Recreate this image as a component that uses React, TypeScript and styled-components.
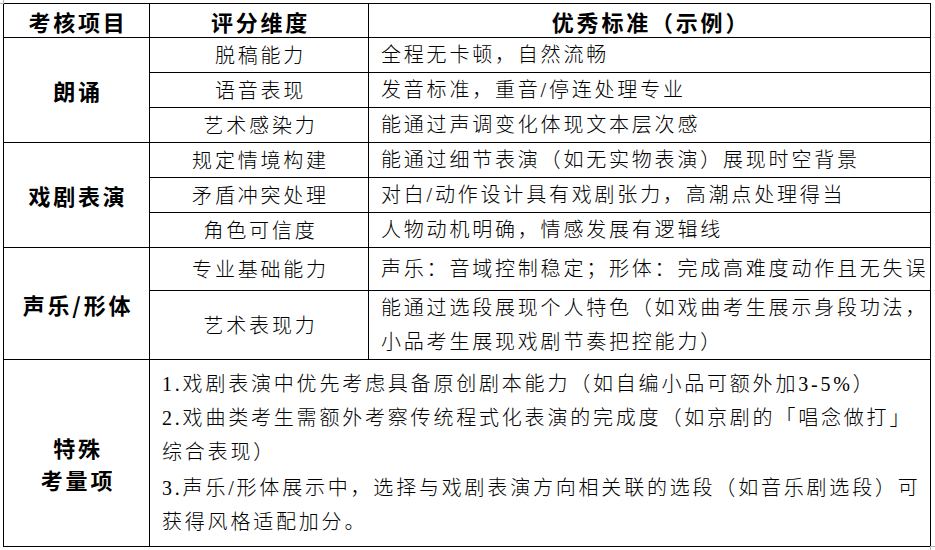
import React from 'react';
import styled, { createGlobalStyle } from 'styled-components';

const GlobalStyle = createGlobalStyle`
  html, body {
    margin: 0;
    padding: 0;
    background: #ffffff;
  }
`;

const Page = styled.div`
  position: relative;
  width: 935px;
  height: 550px;
  padding: 3px 0 0 3px;
  box-sizing: border-box;
  background: #fff;

  /* Word's little table corner markers */
  &::before {
    content: '';
    position: absolute;
    left: 0;
    top: 0;
    width: 3px;
    height: 3px;
    border-right: 1px solid #b5b5b5;
    border-bottom: 1px solid #b5b5b5;
  }
  &::after {
    content: '';
    position: absolute;
    left: 930px;
    top: 546px;
    width: 5px;
    height: 4px;
    border-left: 1px solid #b5b5b5;
    border-top: 1px solid #b5b5b5;
  }
`;

const Table = styled.table`
  border-collapse: collapse;
  table-layout: fixed;
  width: 927px;
  font-family: 'Liberation Serif', 'Noto Sans CJK SC', serif;
  color: #000;
`;

const Row = styled.tr<{ $h: number }>`
  height: ${p => p.$h}px;
`;

const Cell = styled.td`
  border: 1px solid #000;
  padding: 0;
  vertical-align: middle;
  white-space: nowrap;
  overflow: hidden;
`;

const HeadCell = styled.th`
  border: 1px solid #000;
  padding: 0 0 0 3px;
  font-family: 'Noto Sans CJK SC', sans-serif;
  font-weight: 700;
  font-size: 22px;
  letter-spacing: 2.8px;
  line-height: 1;
  text-align: center;
  color: #000;
`;

const CategoryCell = styled(Cell)<{ $pt?: number }>`
  font-family: 'Noto Sans CJK SC', sans-serif;
  font-weight: 700;
  font-size: 22px;
  letter-spacing: 2.8px;
  line-height: 32px;
  text-align: center;
  color: #000;
  padding-top: ${p => p.$pt ?? 0}px;
  padding-left: 3px;
`;

const DimCell = styled(Cell)`
  font-family: 'Noto Sans CJK SC', sans-serif;
  font-weight: 300;
  font-size: 20px;
  letter-spacing: 2.8px;
  line-height: 34px;
  text-align: center;
  padding-left: 3px;
`;

const StdCell = styled(Cell)`
  font-weight: 300;
  font-size: 20px;
  letter-spacing: 2.8px;
  line-height: 34px;
  text-align: left;
  padding-left: 12px;
`;

const NoteCell = styled(StdCell)`
  padding-top: 0;
`;

const Para = styled.div<{ $gap?: number }>`
  margin-top: ${p => p.$gap ?? 0}px;
`;

type Item = { dim: string; std: React.ReactNode; h: number };
type Group = { name: React.ReactNode; items: Item[] };

const groups: Group[] = [
  {
    name: '朗诵',
    items: [
      { dim: '脱稿能力', std: '全程无卡顿，自然流畅', h: 35 },
      { dim: '语音表现', std: '发音标准，重音/停连处理专业', h: 35 },
      { dim: '艺术感染力', std: '能通过声调变化体现文本层次感', h: 35 },
    ],
  },
  {
    name: '戏剧表演',
    items: [
      { dim: '规定情境构建', std: '能通过细节表演（如无实物表演）展现时空背景', h: 35 },
      { dim: '矛盾冲突处理', std: '对白/动作设计具有戏剧张力，高潮点处理得当', h: 35 },
      { dim: '角色可信度', std: '人物动机明确，情感发展有逻辑线', h: 34 },
    ],
  },
  {
    name: '声乐/形体',
    items: [
      { dim: '专业基础能力', std: '声乐：音域控制稳定；形体：完成高难度动作且无失误', h: 43 },
      {
        dim: '艺术表现力',
        std: (
          <>
            能通过选段展现个人特色（如戏曲考生展示身段功法，
            <br />
            小品考生展现戏剧节奏把控能力）
          </>
        ),
        h: 69,
      },
    ],
  },
];

export default function App() {
  return (
    <Page>
      <GlobalStyle />
      <Table>
        <colgroup>
          <col style={{ width: 146 }} />
          <col style={{ width: 219 }} />
          <col style={{ width: 562 }} />
        </colgroup>
        <thead>
          <Row $h={34}>
            <HeadCell>考核项目</HeadCell>
            <HeadCell>评分维度</HeadCell>
            <HeadCell>优秀标准（示例）</HeadCell>
          </Row>
        </thead>
        <tbody>
          {groups.map(g =>
            g.items.map((it, i) => (
              <Row key={it.dim} $h={it.h}>
                {i === 0 && (
                  <CategoryCell rowSpan={g.items.length}>{g.name}</CategoryCell>
                )}
                <DimCell>{it.dim}</DimCell>
                <StdCell>{it.std}</StdCell>
              </Row>
            ))
          )}
          <Row $h={187}>
            <CategoryCell $pt={20}>
              特殊
              <br />
              考量项
            </CategoryCell>
            <NoteCell colSpan={2}>
              <Para>1.戏剧表演中优先考虑具备原创剧本能力（如自编小品可额外加3-5%）</Para>
              <Para>
                2.戏曲类考生需额外考察传统程式化表演的完成度（如京剧的「唱念做打」
                <br />
                综合表现）
              </Para>
              <Para $gap={2}>
                3.声乐/形体展示中，选择与戏剧表演方向相关联的选段（如音乐剧选段）可
                <br />
                获得风格适配加分。
              </Para>
            </NoteCell>
          </Row>
        </tbody>
      </Table>
    </Page>
  );
}
